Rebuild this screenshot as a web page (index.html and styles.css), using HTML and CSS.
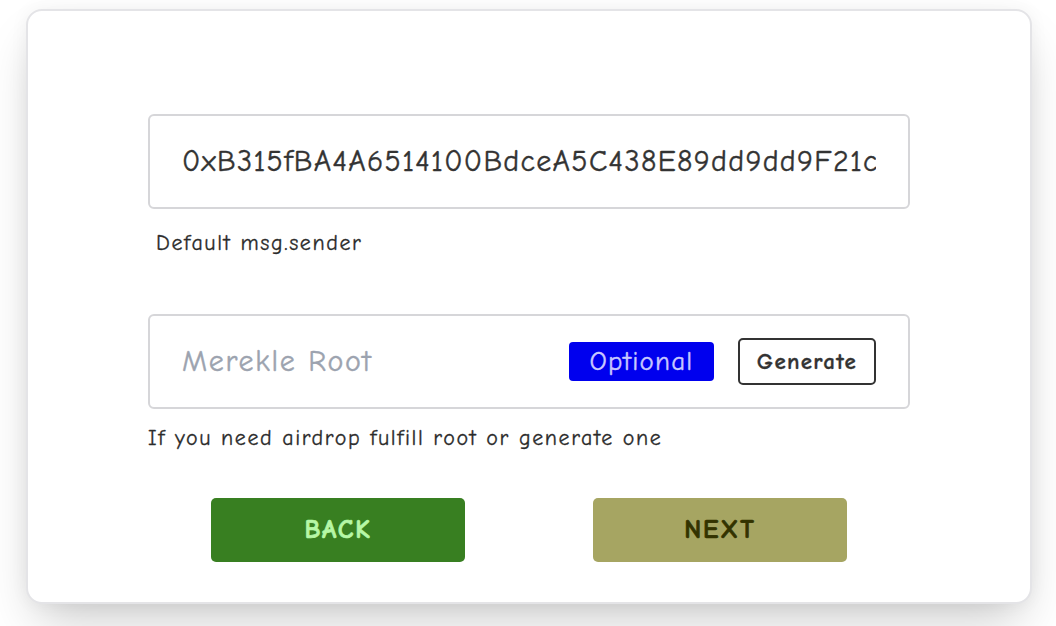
FILE: index.html
```html
<!DOCTYPE html>
<html>
<head>
<meta charset="utf-8">
<link rel="stylesheet" href="styles.css">
</head>
<body>
<div class="card">
  <div class="content">
    <div class="field">
      <div class="value">0xB315fBA4A6514100BdceA5C438E89dd9dd9F21c7</div>
    </div>
    <div class="hint indent">Default msg.sender</div>
    <div class="field field-root">
      <div class="placeholder">Merekle Root</div>
      <span class="badge">Optional</span>
      <button class="gen">Generate</button>
    </div>
    <div class="hint">If you need airdrop fulfill root or generate one</div>
    <div class="actions">
      <button class="btn back">BACK</button>
      <button class="btn next">NEXT</button>
    </div>
  </div>
</div>
</body>
</html>
```
FILE: styles.css
```css
html, body {
  margin: 0;
  padding: 0;
  background: #ffffff;
}
body {
  font-family: "Comic Sans MS", "Comic Neue", "Noto Sans", sans-serif;
  color: #333333;
  padding: 9px 0 0 26px;
  height: 626px;
  box-sizing: border-box;
  overflow: hidden;
}
.card {
  box-sizing: border-box;
  width: 1006px;
  height: 595px;
  border: 2px solid #e4e4e7;
  border-radius: 16px;
  background: #ffffff;
  box-shadow: 0 25px 50px -12px rgba(0, 0, 0, 0.22), 0 0 18px rgba(0, 0, 0, 0.05);
  padding: 103px 0 0 120px;
}
.content {
  width: 762px;
}
.field {
  box-sizing: border-box;
  height: 95px;
  border: 2px solid #d6d6d9;
  border-radius: 6px;
  display: flex;
  align-items: center;
  padding: 0 32px;
  overflow: hidden;
}
.value {
  font-size: 30px;
  letter-spacing: 1.3px;
  white-space: nowrap;
  overflow: hidden;
  color: #333333;
  -webkit-text-stroke: 0.4px #333333;
}
.hint {
  font-size: 22px;
  letter-spacing: 1.6px;
  color: #2b2b2b;
  margin-top: 22px;
  line-height: 24px;
  -webkit-text-stroke: 0.3px #2b2b2b;
}
.indent {
  padding-left: 8px;
  margin-bottom: 59px;
}
.field-root {
  padding-right: 32px;
}
.placeholder {
  flex: 1;
  font-size: 30px;
  letter-spacing: 1.7px;
  color: #9ca3af;
  -webkit-text-stroke: 0.4px #9ca3af;
}
.badge {
  background: #0000ee;
  color: #c8c8ff;
  font-size: 27px;
  letter-spacing: 1.2px;
  border-radius: 4px;
  width: 145px;
  height: 39px;
  display: flex;
  align-items: center;
  justify-content: center;
  margin-right: 24px;
  -webkit-text-stroke: 0.4px #c8c8ff;
}
.gen {
  box-sizing: border-box;
  width: 138px;
  height: 47px;
  border: 2px solid #333333;
  border-radius: 5px;
  background: #ffffff;
  font-family: inherit;
  font-weight: bold;
  font-size: 23px;
  letter-spacing: 1.3px;
  color: #333333;
  padding: 0;
  -webkit-text-stroke: 0.3px #333333;
}
.field-root + .hint {
  margin-top: 17px;
}
.actions {
  display: flex;
  justify-content: center;
  gap: 128px;
  margin-top: 48px;
}
.btn {
  width: 254px;
  height: 64px;
  border: none;
  border-radius: 5px;
  font-family: inherit;
  font-weight: bold;
  font-size: 26px;
  letter-spacing: 1.8px;
  padding: 0;
}
.back {
  background: #387f21;
  color: #b6f7a6;
  -webkit-text-stroke: 0.7px #b6f7a6;
}
.next {
  background: #a6a562;
  color: #333300;
  -webkit-text-stroke: 0.7px #333300;
}
```
